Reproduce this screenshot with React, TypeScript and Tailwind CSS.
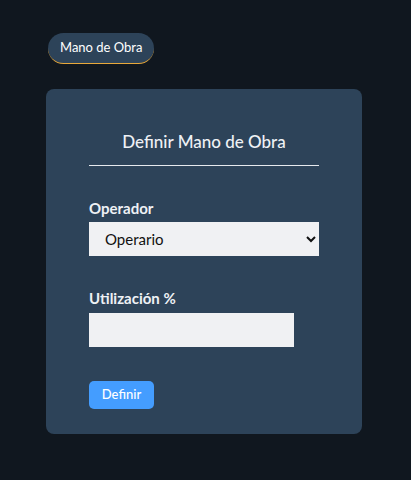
import { useState } from 'react';

export default function App() {
  const [operador, setOperador] = useState('Operario');
  const [util, setUtil] = useState('');

  return (
    <div
      className="min-h-[480px] w-full bg-[#10171f] pt-[33px] pl-[46px]"
      style={{ fontFamily: 'Lato, "Open Sans", sans-serif' }}
    >
      {/* Tab pill */}
      <div className="ml-[2px] inline-flex h-[31px] items-center rounded-full border-b border-[#e8a83a] bg-[#2d4359] px-[12px] text-[13px] text-white">
        Mano de Obra
      </div>

      {/* Card */}
      <div className="mt-[25px] flex h-[345px] w-[316px] flex-col rounded-lg bg-[#2d4359] px-[43px] pt-[40px]">
        <h2 className="text-center text-[17px] font-medium text-[#eef1f5]">Definir Mano de Obra</h2>
        <div className="mt-[10px] h-px w-full bg-[#e6e9ee]" />

        <label className="mt-[31px] text-[15px] font-bold text-[#eef1f5]">Operador</label>
        <select
          value={operador}
          onChange={e => setOperador(e.target.value)}
          className="mt-[3px] h-[34px] w-full bg-[#f0f1f3] px-[12px] text-[15px] text-[#111] outline-none"
        >
          <option>Operario</option>
          <option>Supervisor</option>
        </select>

        <label className="mt-[31px] text-[15px] font-bold text-[#eef1f5]">Utilización %</label>
        <input
          value={util}
          onChange={e => setUtil(e.target.value)}
          className="mt-[3px] h-[34px] w-[205px] bg-[#f0f1f3] px-2 text-[15px] outline-none"
        />

        <button className="mt-[34px] h-[28px] w-[65px] rounded-[5px] bg-[#449dff] text-[13px] font-medium text-white">
          Definir
        </button>
      </div>
    </div>
  );
}
